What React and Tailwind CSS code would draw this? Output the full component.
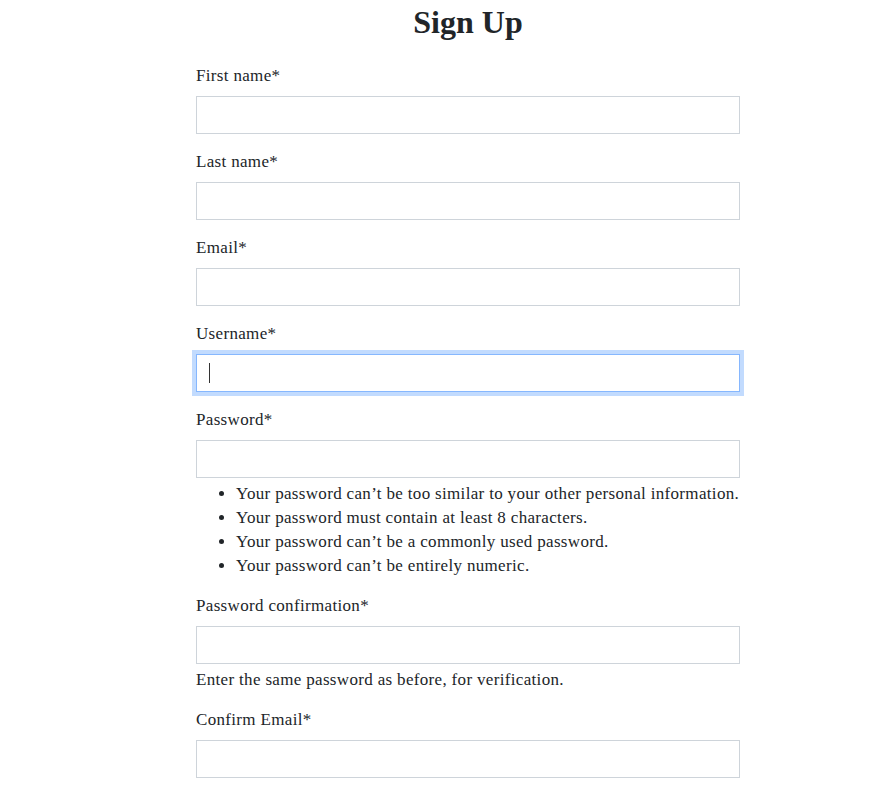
const fields = [
  { label: "First name*", name: "first_name" },
  { label: "Last name*", name: "last_name" },
  { label: "Email*", name: "email" },
  { label: "Username*", name: "username", focused: true },
];

const passwordHelp = [
  "Your password can’t be too similar to your other personal information.",
  "Your password must contain at least 8 characters.",
  "Your password can’t be a commonly used password.",
  "Your password can’t be entirely numeric.",
];

const Field = ({ label, focused, children }) => (
  <div className="mt-4 first:mt-0">
    <label className="block h-6 leading-6 mb-2">{label}</label>
    <div
      className={
        focused
          ? "h-[38px] border border-[#86b7fe] bg-white shadow-[0_0_0_4px_rgba(13,110,253,0.25)] flex items-center pl-3"
          : "h-[38px] border border-[#ced4da] bg-white"
      }
    >
      {focused && <span className="block w-px h-[20px] bg-[#333]"></span>}
    </div>
    {children}
  </div>
);

export default function App() {
  return (
    <div
      className="min-h-screen bg-white text-[#212529] text-[17px] tracking-[0.33px]"
      style={{ fontFamily: '"Liberation Serif", "Times New Roman", serif' }}
    >
      <div className="w-[544px] ml-[196px]">
        <h1 className="text-center text-[32px] font-bold tracking-normal leading-[38px] pt-[3px] mb-[23px]">
          Sign Up
        </h1>

        <form>
          {fields.map((f) => (
            <Field key={f.name} label={f.label} focused={f.focused} />
          ))}

          <Field label="Password*">
            <ul className="list-disc pl-10 mt-1 mb-4">
              {passwordHelp.map((line, i) => (
                <li key={i} className="leading-6 whitespace-nowrap">
                  {line}
                </li>
              ))}
            </ul>
          </Field>

          <Field label="Password confirmation*">
            <p className="mt-1 leading-6">
              Enter the same password as before, for verification.
            </p>
          </Field>

          <Field label="Confirm Email*" />
        </form>
      </div>
    </div>
  );
}
